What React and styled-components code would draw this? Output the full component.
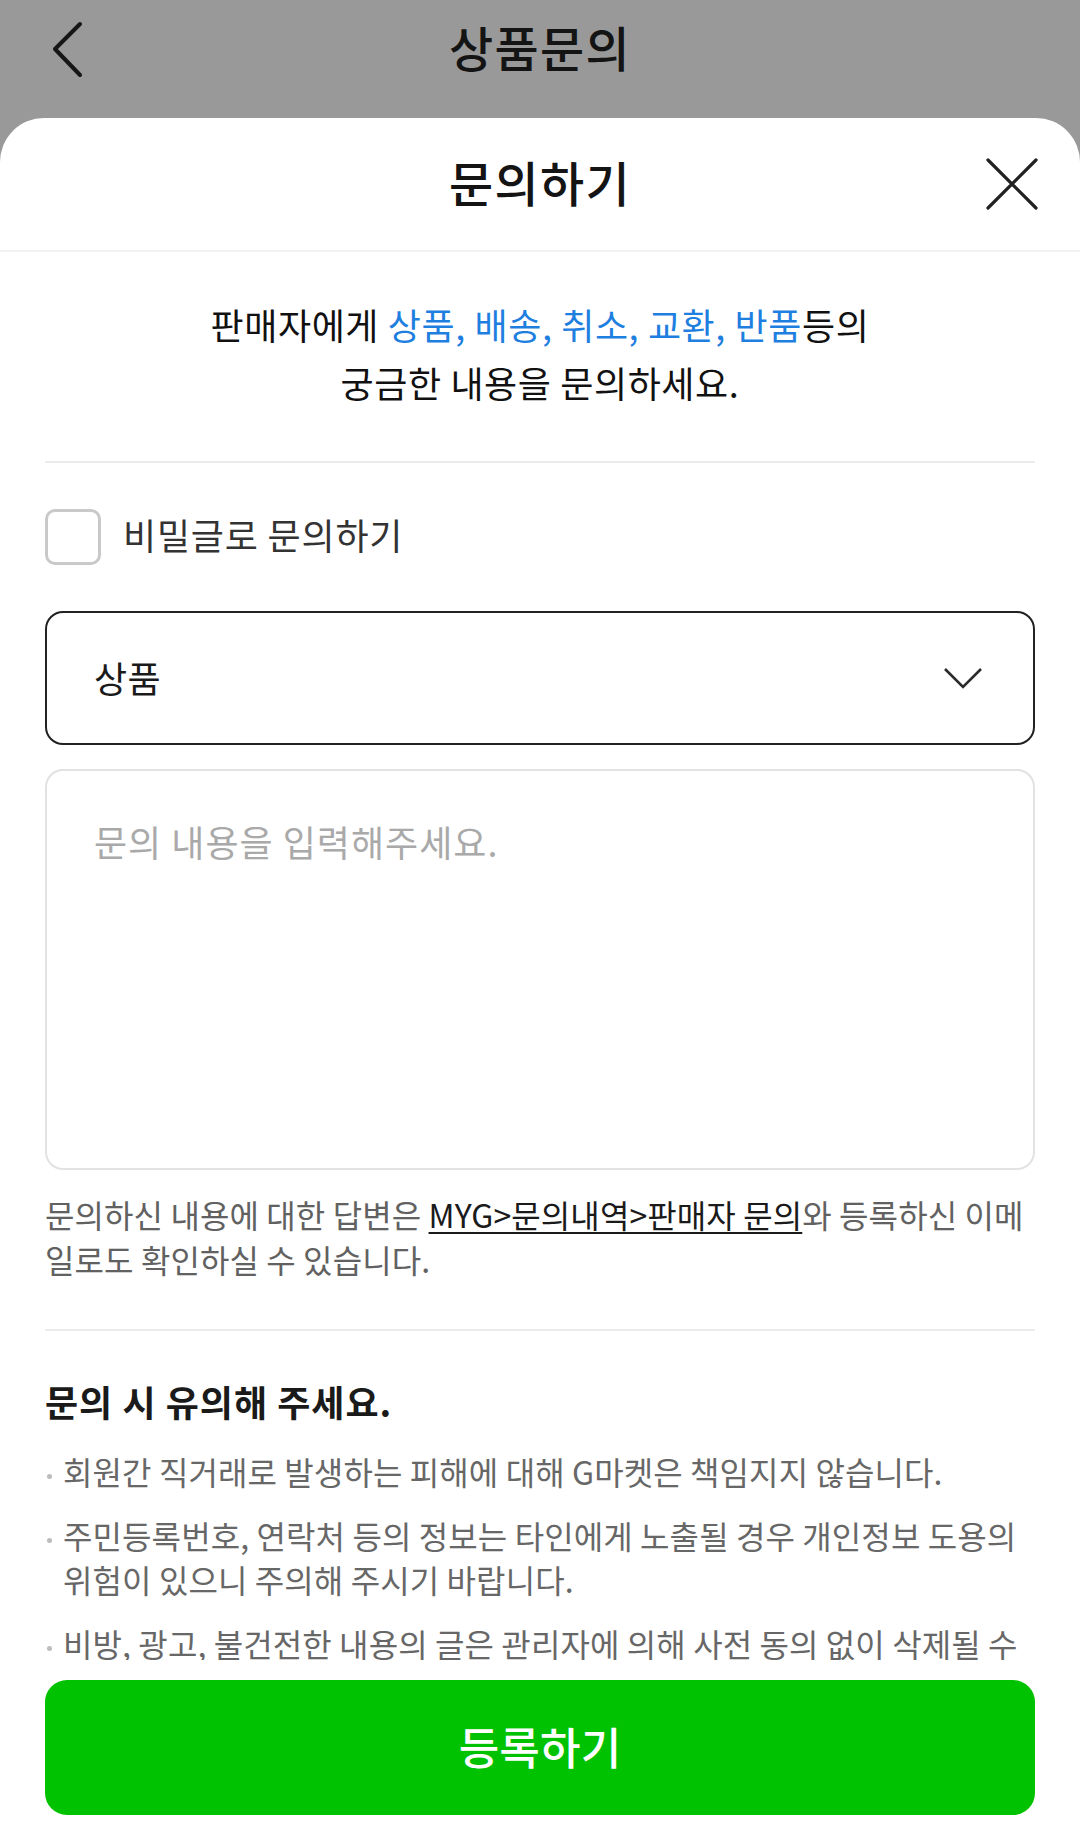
import React, {useState} from 'react';
import styled, {createGlobalStyle} from 'styled-components';

const GlobalStyle = createGlobalStyle`
  html, body { margin: 0; padding: 0; background: #999999; }
  body { font-family: "Noto Sans CJK KR", "Noto Sans", sans-serif; }
  * { box-sizing: border-box; }
`;

const Page = styled.div`
  width: 1080px;
  height: 1836px;
  display: flex;
  flex-direction: column;
  background: #999999;
  overflow: hidden;
`;

const TopBar = styled.header`
  height: 118px;
  padding-bottom: 18px;
  display: grid;
  grid-template-columns: 1fr auto 1fr;
  align-items: center;
`;

const BackBtn = styled.button`
  justify-self: start;
  margin-left: 46px;
  width: 42px;
  height: 64px;
  padding: 0;
  border: none;
  background: none;
  display: flex;
  align-items: center;
  justify-content: center;
`;

const Title = styled.h1`
  margin: 0 0 ${(p) => p.$lift || 0}px;
  font-size: 48px;
  font-weight: 500;
  letter-spacing: 1.4px;
  color: #141414;
  line-height: 1;
`;

const Sheet = styled.section`
  flex: 1;
  display: flex;
  flex-direction: column;
  background: #fff;
  border-radius: 44px 44px 0 0;
  overflow: hidden;
`;

const SheetHeader = styled.div`
  height: 134px;
  flex-shrink: 0;
  display: grid;
  grid-template-columns: 1fr auto 1fr;
  align-items: center;
  border-bottom: 2px solid #f1f1f1;
`;

const CloseBtn = styled.button`
  justify-self: end;
  margin-right: 40px;
  width: 56px;
  height: 56px;
  padding: 0;
  border: none;
  background: none;
  display: flex;
  align-items: center;
  justify-content: center;
`;

const Body = styled.div`
  flex: 1;
  overflow: hidden;
  padding: 0 45px;
`;

const Intro = styled.p`
  margin: 0;
  padding: 43px 0 50px;
  border-bottom: 2px solid #ebebeb;
  text-align: center;
  font-size: 36px;
  line-height: 58px;
  letter-spacing: 0.6px;
  color: #111;
`;

const Blue = styled.span`
  color: #1f7fe0;
`;

const CheckRow = styled.label`
  margin-top: 46px;
  height: 56px;
  display: flex;
  align-items: center;
  gap: 22px;
  font-size: 36px;
  line-height: 1;
  letter-spacing: 0.8px;
  color: #333;
`;

const CheckText = styled.span`
  padding-bottom: 6px;
`;

const CheckBox = styled.input`
  appearance: none;
  flex-shrink: 0;
  margin: 0;
  width: 56px;
  height: 56px;
  border: 3px solid #c9c9c9;
  border-radius: 10px;
  background: #fff;
  &:checked {
    background: #00c200;
    border-color: #00c200;
  }
`;

const SelectBox = styled.button`
  margin-top: 46px;
  width: 100%;
  height: 134px;
  padding: 0 50px 0 47px;
  display: flex;
  align-items: center;
  justify-content: space-between;
  border: 2px solid #222;
  border-radius: 18px;
  background: #fff;
  font-family: inherit;
  font-size: 36px;
  line-height: 1;
  letter-spacing: 0.5px;
  color: #1a1a1a;
  span {
    padding-bottom: 3px;
  }
`;

const TextArea = styled.textarea`
  display: block;
  margin-top: 24px;
  width: 100%;
  height: 401px;
  padding: 45px 47px;
  border: 2px solid #e2e2e2;
  border-radius: 18px;
  resize: none;
  outline: none;
  font-family: inherit;
  font-size: 36px;
  line-height: 50px;
  letter-spacing: 1px;
  color: #222;
  &::placeholder {
    color: #a9a9a9;
  }
`;

const Note = styled.p`
  margin: 22px 0 0;
  padding-bottom: 47px;
  border-bottom: 2px solid #ebebeb;
  font-size: 32px;
  line-height: 45px;
  letter-spacing: 0.1px;
  color: #616161;
`;

const Link = styled.a`
  color: #1a1a1a;
  text-decoration: underline;
  text-decoration-thickness: 2px;
  text-underline-offset: 4px;
`;

const Caution = styled.div`
  padding-top: 46px;
`;

const CautionTitle = styled.h2`
  margin: 0;
  font-size: 36px;
  line-height: 48px;
  font-weight: 700;
  letter-spacing: 1px;
  color: #1a1a1a;
`;

const List = styled.ul`
  margin: 24px 0 0;
  padding: 0;
  list-style: none;
  display: flex;
  flex-direction: column;
  gap: 20px;
`;

const Item = styled.li`
  position: relative;
  padding-left: 18px;
  font-size: 32px;
  line-height: 44px;
  letter-spacing: 0.1px;
  color: #676767;
  &::before {
    content: "";
    position: absolute;
    left: 2px;
    top: 25px;
    width: 5px;
    height: 5px;
    border-radius: 50%;
    background: #bdbdbd;
  }
`;

const Footer = styled.div`
  flex-shrink: 0;
  padding: 20px 45px 21px;
  background: #fff;
`;

const SubmitBtn = styled.button`
  width: 100%;
  height: 135px;
  padding-bottom: 4px;
  border: none;
  border-radius: 22px;
  background: #00c200;
  color: #fff;
  font-family: inherit;
  font-size: 44px;
  font-weight: 500;
  letter-spacing: 0.2px;
`;

const cautions = [
  '회원간 직거래로 발생하는 피해에 대해 G마켓은 책임지지 않습니다.',
  '주민등록번호, 연락처 등의 정보는 타인에게 노출될 경우 개인정보 도용의 위험이 있으니 주의해 주시기 바랍니다.',
  '비방, 광고, 불건전한 내용의 글은 관리자에 의해 사전 동의 없이 삭제될 수 있습니다.',
];

const App = () => {
  const [secret, setSecret] = useState(false);
  const [text, setText] = useState('');

  return (
    <>
      <GlobalStyle />
      <Page>
        <TopBar>
          <BackBtn aria-label="뒤로">
            <svg width="34" height="58" viewBox="0 0 34 58">
              <polyline points="30,3 5,28 30,54" fill="none" stroke="#161616" strokeWidth="4" strokeLinecap="round" strokeLinejoin="round" />
            </svg>
          </BackBtn>
          <Title $lift={8}>상품문의</Title>
          <span />
        </TopBar>

        <Sheet>
          <SheetHeader>
            <span />
            <Title $lift={6}>문의하기</Title>
            <CloseBtn aria-label="닫기">
              <svg width="52" height="52" viewBox="0 0 52 52">
                <path d="M2 2 L50 50 M50 2 L2 50" stroke="#222" strokeWidth="3.2" strokeLinecap="round" />
              </svg>
            </CloseBtn>
          </SheetHeader>

          <Body>
            <Intro>
              판매자에게 <Blue>상품, 배송, 취소, 교환, 반품</Blue>등의
              <br />
              궁금한 내용을 문의하세요.
            </Intro>

            <CheckRow>
              <CheckBox type="checkbox" checked={secret} onChange={(e) => setSecret(e.target.checked)} />
              <CheckText>비밀글로 문의하기</CheckText>
            </CheckRow>

            <SelectBox>
              <span>상품</span>
              <svg width="40" height="24" viewBox="0 0 40 24">
                <polyline points="2,3 20,21 38,3" fill="none" stroke="#2a2a2a" strokeWidth="2.6" />
              </svg>
            </SelectBox>

            <TextArea
              value={text}
              onChange={(e) => setText(e.target.value)}
              placeholder="문의 내용을 입력해주세요."
            />

            <Note>
              문의하신 내용에 대한 답변은 <Link>MYG&gt;문의내역&gt;판매자 문의</Link>와 등록하신 이메일로도 확인하실 수 있습니다.
            </Note>

            <Caution>
              <CautionTitle>문의 시 유의해 주세요.</CautionTitle>
              <List>
                {cautions.map((c) => (
                  <Item key={c}>{c}</Item>
                ))}
              </List>
            </Caution>
          </Body>

          <Footer>
            <SubmitBtn>등록하기</SubmitBtn>
          </Footer>
        </Sheet>
      </Page>
    </>
  );
};

export default App;
